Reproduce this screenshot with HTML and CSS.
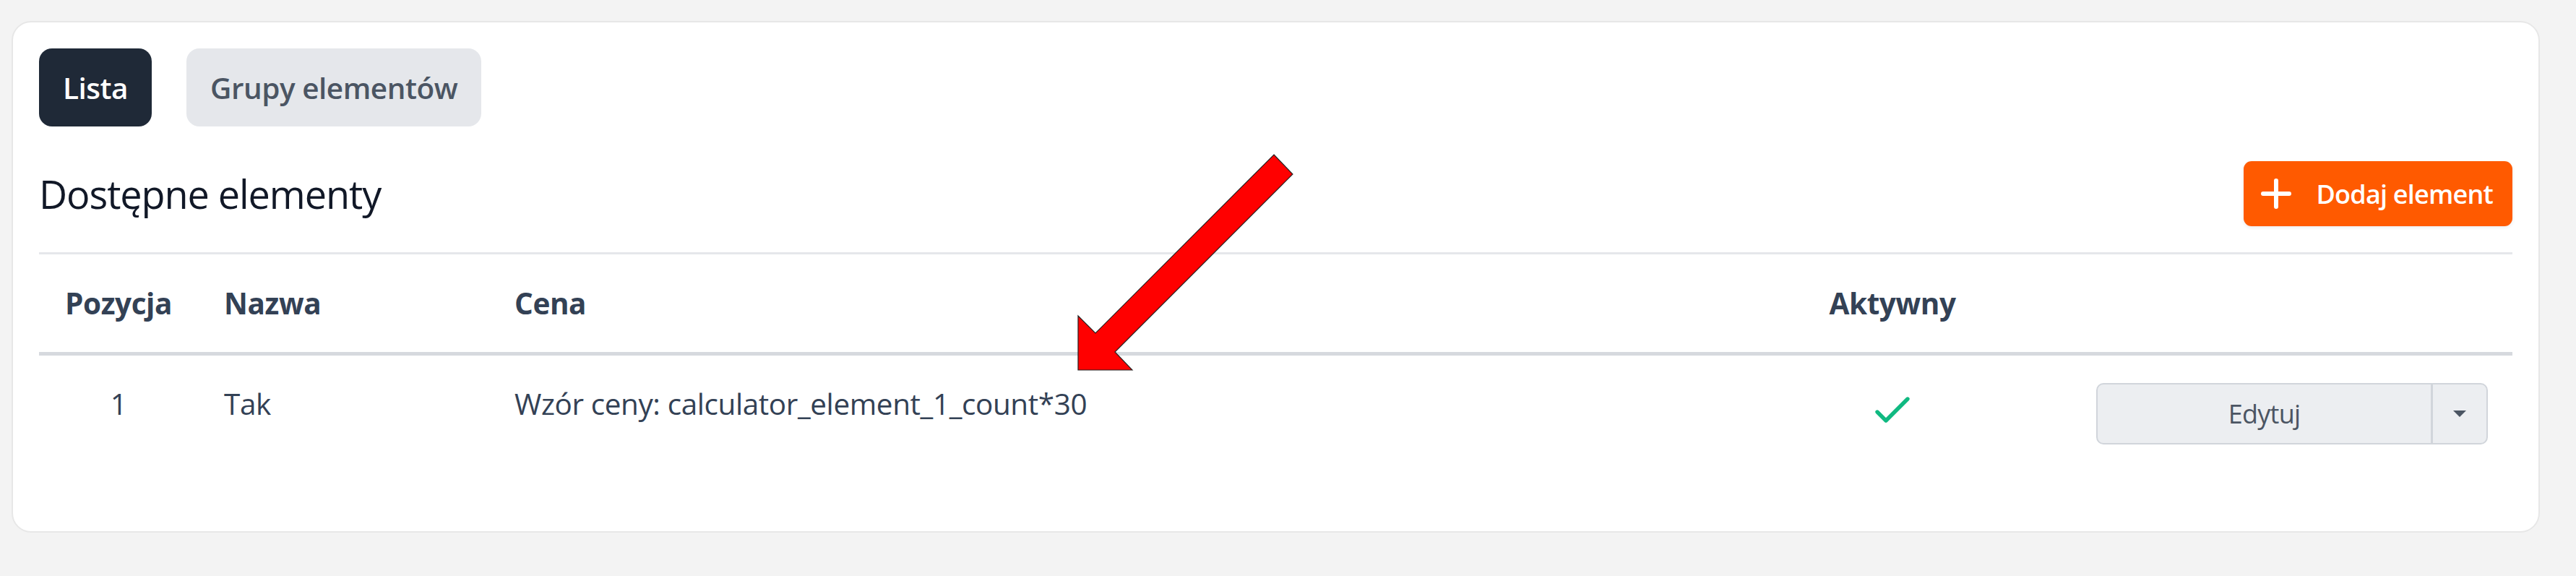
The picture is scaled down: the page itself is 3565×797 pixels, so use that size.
FILE: index.html
```html
<!DOCTYPE html>
<html lang="pl">
<head>
<meta charset="utf-8">
<title>Dostępne elementy</title>
<link rel="stylesheet" href="styles.css">
</head>
<body>
<div class="page">
  <div class="card">
    <div class="tabs">
      <button class="tab tab-active">Lista</button>
      <button class="tab">Grupy elementów</button>
    </div>
    <div class="head-row">
      <h2 class="title">Dostępne elementy</h2>
      <button class="add-btn">
        <svg class="plus" width="42" height="42" viewBox="0 0 42 42"><path d="M21 3v36M3 21h36" stroke="#fff" stroke-width="6" stroke-linecap="round" fill="none"/></svg>
        <span>Dodaj element</span>
      </button>
    </div>
    <table class="tbl">
      <colgroup>
        <col class="c1"><col class="c2"><col class="c3"><col class="c4"><col class="c5">
      </colgroup>
      <thead>
        <tr>
          <th class="center">Pozycja</th>
          <th>Nazwa</th>
          <th>Cena</th>
          <th class="center">Aktywny</th>
          <th></th>
        </tr>
      </thead>
      <tbody>
        <tr>
          <td class="center">1</td>
          <td>Tak</td>
          <td>Wzór ceny: calculator_element_1_count*30</td>
          <td class="center"><svg class="check" width="72" height="72" viewBox="0 0 24 24"><path d="M5 13l4 4L19 7" stroke="#10b981" stroke-width="1.8" stroke-linecap="round" stroke-linejoin="round" fill="none"/></svg></td>
          <td class="right">
            <div class="btn-group">
              <button class="edit-btn">Edytuj</button>
              <button class="caret-btn"><span class="caret"></span></button>
            </div>
          </td>
        </tr>
      </tbody>
    </table>
  </div>
  <svg class="arrow" width="320" height="325" viewBox="0 0 320 325"><polygon points="283,14 309,41 63,287 87,312 12,312 12,237 36,261" fill="#ff0000" stroke="#222" stroke-width="1.2"/></svg>
</div>
</body>
</html>
```

FILE: styles.css
```css
* { box-sizing: border-box; }
html, body { margin: 0; padding: 0; }
body {
  background: #f3f3f3;
  font-family: "Open Sans", "Noto Sans", sans-serif;
  letter-spacing: -0.026em;
  width: 3565px;
  height: 797px;
  overflow: hidden;
}
.page {
  position: relative;
  padding: 29px 50px 0 16px;
}
.card {
  width: 3499px;
  height: 708px;
  background: #fff;
  border: 2px solid #e7e7e7;
  border-radius: 27px;
  padding: 36px 36px 0 36px;
}
.tabs {
  display: flex;
  gap: 48px;
}
.tab {
  height: 108px;
  border: 0;
  border-radius: 18px;
  padding: 0 33px;
  font-family: inherit;
  font-size: 40.5px;
  font-weight: 600;
  letter-spacing: -0.012em;
  background: #e5e7eb;
  color: #4b5563;
}
.tab-active {
  background: #1f2937;
  color: #fff;
}
.head-row {
  margin-top: 48px;
  display: flex;
  justify-content: space-between;
  align-items: center;
  padding-bottom: 36px;
  border-bottom: 3px solid #e5e7eb;
}
.title {
  margin: 0;
  font-size: 54px;
  font-weight: 400;
  letter-spacing: -0.02em;
  color: #111827;
  line-height: 90px;
}
.add-btn {
  height: 90px;
  display: flex;
  align-items: center;
  gap: 35px;
  border: 0;
  border-radius: 11px;
  background: #ff5a00;
  color: #fff;
  font-family: inherit;
  font-size: 36px;
  font-weight: 600;
  letter-spacing: -0.022em;
  padding: 0 27px 0 24px;
  box-shadow: 0 2px 5px rgba(0,0,0,0.08);
}
.plus { display: block; }
.tbl {
  width: 3423px;
  table-layout: fixed;
  border-collapse: collapse;
  color: #334155;
  font-size: 40.5px;
}
.c1 { width: 220px; }
.c2 { width: 402px; }
.c3 { width: 1697px; }
.c4 { width: 492px; }
.c5 { width: 612px; }
.tbl th {
  text-align: left;
  font-weight: 700;
  padding: 36px;
  line-height: 63px;
  border-bottom: 5px solid #d6d9de;
}
.tbl td {
  vertical-align: top;
  padding: 36px;
  line-height: 61px;
}
.tbl .center { text-align: center; }
.tbl .right { text-align: right; }
.check { display: inline-block; vertical-align: top; margin-top: 3px; }
.btn-group {
  display: inline-flex;
  height: 85px;
  margin-top: 2px;
  border: 2px solid #d1d5db;
  border-radius: 10px;
  background: #eceef1;
  overflow: hidden;
}
.edit-btn {
  width: 461px;
  border: 0;
  background: transparent;
  font-family: inherit;
  font-size: 36px;
  letter-spacing: -0.02em;
  color: #4b5563;
  padding: 0;
}
.caret-btn {
  width: 77px;
  border: 0;
  border-left: 3px solid #d1d5db;
  background: transparent;
  display: flex;
  align-items: center;
  justify-content: center;
  padding: 0;
}
.caret {
  width: 0;
  height: 0;
  border-left: 9px solid transparent;
  border-right: 9px solid transparent;
  border-top: 9px solid #4b5563;
}
.arrow {
  position: absolute;
  left: 1480px;
  top: 200px;
}
```
